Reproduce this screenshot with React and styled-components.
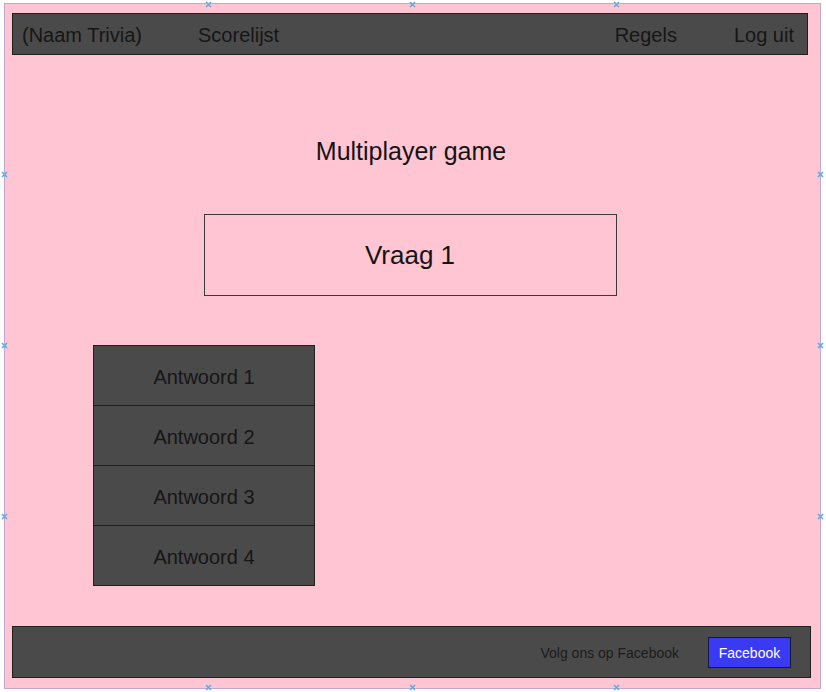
import React from "react";
import styled, { createGlobalStyle } from "styled-components";

const Global = createGlobalStyle`
  html, body { margin: 0; padding: 0; background: #ffffff; }
  body { font-family: "Liberation Sans", Arial, sans-serif; }
`;

const Page = styled.div`
  width: 826px;
  height: 692px;
  padding: 3px 0 0 4px;
  box-sizing: border-box;
`;

const Frame = styled.div`
  position: relative;
  width: 817px;
  height: 686px;
  box-sizing: border-box;
  background: #ffc5d2;
  border: 1px solid #c3a6d3;
  padding: 9px 10px 10px 7px;
  display: flex;
  flex-direction: column;
`;

const Header = styled.nav`
  height: 42px;
  box-sizing: border-box;
  background: #4a4a4a;
  border: 1px solid #1f1f1f;
  margin-right: 2px;
  display: flex;
  align-items: center;
  padding: 2px 13px 0 9px;
  font-size: 20px;
  color: #161616;
`;

const NavItem = styled.span`
  margin-left: ${(p) => p.$gap || 0}px;
  white-space: nowrap;
`;

const Spacer = styled.div`
  flex: 1;
`;

const Main = styled.main`
  flex: 1;
  display: flex;
  flex-direction: column;
  align-items: center;
`;

const Title = styled.h1`
  margin: 82px 0 0 0;
  font-weight: normal;
  font-size: 25px;
  line-height: 28px;
  color: #141414;
`;

const Question = styled.div`
  margin-top: 49px;
  margin-right: 2px;
  width: 413px;
  height: 82px;
  box-sizing: border-box;
  border: 1px solid #3a3a3a;
  display: flex;
  align-items: center;
  justify-content: center;
  font-size: 26px;
  color: #141414;
`;

const Answers = styled.div`
  align-self: flex-start;
  margin-top: 49px;
  margin-left: 81px;
  width: 222px;
  display: flex;
  flex-direction: column;
  border: 1px solid #1f1f1f;
  border-bottom: none;
  box-sizing: border-box;
`;

const Answer = styled.div`
  height: 60px;
  box-sizing: border-box;
  background: #4a4a4a;
  border-bottom: 1px solid #1f1f1f;
  display: flex;
  align-items: center;
  justify-content: center;
  padding-top: 3px;
  font-size: 20px;
  color: #161616;
`;

const Footer = styled.footer`
  height: 52px;
  box-sizing: border-box;
  margin-right: -1px;
  background: #4a4a4a;
  border: 1px solid #1f1f1f;
  display: flex;
  align-items: center;
  justify-content: flex-end;
  padding-right: 19px;
  font-size: 14px;
  color: #1c1c1c;
`;

const FollowText = styled.span`
  margin-right: 29px;
  margin-top: 1px;
`;

const FbButton = styled.div`
  width: 83px;
  height: 31px;
  box-sizing: border-box;
  background: #3a3af2;
  border: 1px solid #16163a;
  color: #ffffff;
  display: flex;
  align-items: center;
  justify-content: center;
  font-size: 14px;
  margin-top: 1px;
`;

const Handle = styled.svg`
  position: absolute;
  width: 7px;
  height: 7px;
  left: ${(p) => p.$x - 8}px;
  top: ${(p) => p.$y - 7}px;
`;

const handles = [
  [208, 4], [412, 4], [616, 4],
  [4, 174], [820, 174],
  [4, 345], [820, 345],
  [4, 516], [820, 516],
  [208, 687], [412, 687], [616, 687],
];

export default function App() {
  return (
    <>
      <Global />
      <Page>
        <Frame>
          <Header>
            <NavItem>(Naam Trivia)</NavItem>
            <NavItem $gap={56}>Scorelijst</NavItem>
            <Spacer />
            <NavItem>Regels</NavItem>
            <NavItem $gap={57}>Log uit</NavItem>
          </Header>
          <Main>
            <Title>Multiplayer game</Title>
            <Question>Vraag 1</Question>
            <Answers>
              <Answer>Antwoord 1</Answer>
              <Answer>Antwoord 2</Answer>
              <Answer>Antwoord 3</Answer>
              <Answer>Antwoord 4</Answer>
            </Answers>
          </Main>
          <Footer>
            <FollowText>Volg ons op Facebook</FollowText>
            <FbButton>Facebook</FbButton>
          </Footer>
          {handles.map(([x, y], i) => (
            <Handle key={i} $x={x} $y={y} viewBox="0 0 7 7">
              <path d="M1 1 L6 6 M6 1 L1 6" stroke="#5aaee6" strokeWidth="1.6" />
            </Handle>
          ))}
        </Frame>
      </Page>
    </>
  );
}
